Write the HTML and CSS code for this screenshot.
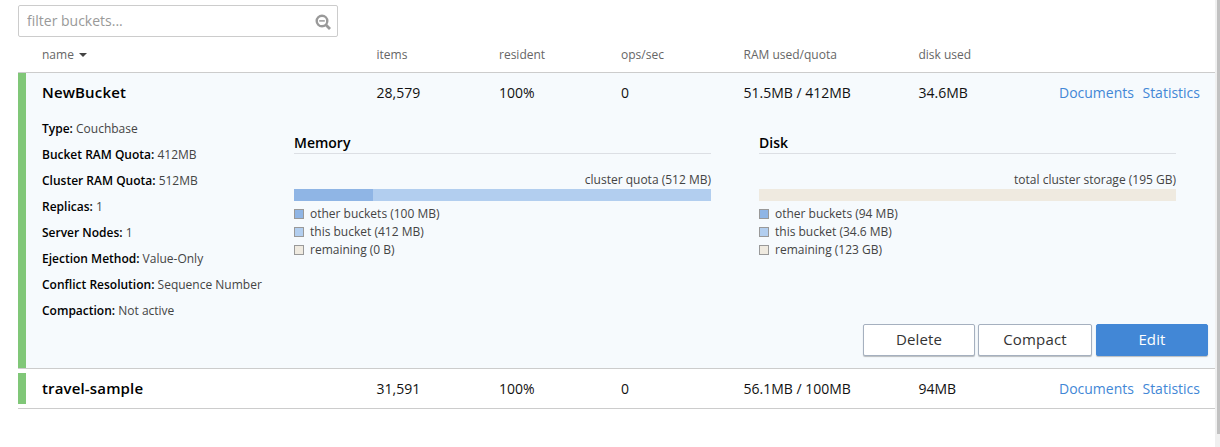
FILE: index.html
```html
<!DOCTYPE html>
<html lang="en">
<head>
<meta charset="utf-8">
<title>Buckets</title>
<link rel="stylesheet" href="styles.css">
</head>
<body>
<main class="page">
  <div class="filter">
    <input class="filter-input" type="text" placeholder="filter buckets...">
    <svg class="filter-icon" viewBox="0 0 16 16" fill="none" stroke="#999">
      <circle cx="7" cy="7" r="5.3" stroke-width="2.4"/>
      <path d="M4.2 6.9h5.6" stroke-width="1.5"/>
      <path d="M10.8 10.8l4.2 4.2" stroke-width="2.8"/>
    </svg>
  </div>

  <div class="columns header">
    <span class="sorted">name <i class="caret"></i></span>
    <span>items</span><span>resident</span><span>ops/sec</span><span>RAM used/quota</span><span>disk used</span>
  </div>

  <section class="bucket open">
    <div class="status"></div>
    <div class="content">
      <div class="columns summary">
        <h2 class="name">NewBucket</h2>
        <span>28,579</span><span>100%</span><span>0</span><span>51.5MB / 412MB</span><span>34.6MB</span>
        <nav class="links"><a>Documents</a><a>Statistics</a></nav>
      </div>
      <div class="details">
        <div class="facts">
          <p><b>Type:</b> Couchbase</p>
          <p><b>Bucket RAM Quota:</b> 412MB</p>
          <p><b>Cluster RAM Quota:</b> 512MB</p>
          <p><b>Replicas:</b> 1</p>
          <p><b>Server Nodes:</b> 1</p>
          <p><b>Ejection Method:</b> Value-Only</p>
          <p><b>Conflict Resolution:</b> Sequence Number</p>
          <p><b>Compaction:</b> Not active</p>
        </div>
        <div class="usage">
          <h3>Memory</h3>
          <div class="total">cluster quota (512 MB)</div>
          <div class="bar"><div class="other" style="width:19%"></div><div class="this" style="width:81%"></div></div>
          <ul class="legend">
            <li><i class="swatch other"></i>other buckets (100 MB)</li>
            <li><i class="swatch this"></i>this bucket (412 MB)</li>
            <li><i class="swatch remaining"></i>remaining (0 B)</li>
          </ul>
        </div>
        <div class="usage">
          <h3>Disk</h3>
          <div class="total">total cluster storage (195 GB)</div>
          <div class="bar"></div>
          <ul class="legend">
            <li><i class="swatch other"></i>other buckets (94 MB)</li>
            <li><i class="swatch this"></i>this bucket (34.6 MB)</li>
            <li><i class="swatch remaining"></i>remaining (123 GB)</li>
          </ul>
        </div>
      </div>
      <div class="actions">
        <button class="button delete">Delete</button>
        <button class="button compact">Compact</button>
        <button class="button primary">Edit</button>
      </div>
    </div>
  </section>

  <section class="bucket closed">
    <div class="status"></div>
    <div class="content">
      <div class="columns summary">
        <h2 class="name">travel-sample</h2>
        <span>31,591</span><span>100%</span><span>0</span><span>56.1MB / 100MB</span><span>94MB</span>
        <nav class="links"><a>Documents</a><a>Statistics</a></nav>
      </div>
    </div>
  </section>
</main>
<aside class="scrollbar"><div class="thumb"></div></aside>
</body>
</html>
```
FILE: styles.css
```css
* { box-sizing: border-box; }
body {
  margin: 0;
  height: 447px;
  display: flex;
  overflow: hidden;
  background: #fff;
  color: #444;
  font: 12px/18px "Open Sans", sans-serif;
}
h2, h3, p, ul { margin: 0; padding: 0; }
.page { width: 1215px; padding: 5px 0 0 18px; }
.filter {
  display: flex;
  align-items: center;
  width: 320px;
  height: 32px;
  padding: 1px 6px 0 8px;
  border: 1px solid #ccc;
  border-radius: 2px;
}
.filter-input {
  flex: 1;
  min-width: 0;
  padding: 0 0 1px;
  border: 0;
  outline: 0;
  background: none;
  font: 14px/20px "Open Sans", sans-serif;
}
.filter-input::placeholder { color: #999; }
.filter-icon { width: 16px; height: 16px; }

.columns {
  display: grid;
  grid-template-columns: 334.5px 122.5px 122px 122.5px 175px 1fr auto;
  align-items: center;
}
.header {
  height: 36px;
  padding-left: 24px;
  color: #666;
  border-bottom: 1px solid #ccc;
}
.sorted { display: flex; align-items: center; gap: 5px; }
.caret {
  border: 4px solid transparent;
  border-top-color: #444;
  border-bottom: 0;
}
.bucket { display: flex; border-bottom: 1px solid #ccc; }
.open { height: 296px; background: #f6fafd; }
.closed { height: 40px; }
.status { width: 8px; background: #80c778; }
.closed .status { height: 31px; margin-top: 4px; }
.content { flex: 1; padding-left: 16px; }
.summary { height: 39px; padding-right: 15px; color: #111; font-size: 14px; line-height: 20px; }
.name { padding-bottom: 2px; color: #000; font-size: 15px; font-weight: 600; letter-spacing: .15px; }
.links { display: flex; gap: 8.5px; color: #4287d6; }

.details { display: grid; grid-template-columns: 252px 417px 417px; height: 212px; }
.details .usage:last-child { margin-left: 48px; width: 417px; }
.facts { display: flex; flex-direction: column; gap: 8px; padding-top: 8px; }
.facts b { color: #000; font-weight: 600; }
.usage { padding-top: 21px; }
.usage h3 {
  height: 21px;
  border-bottom: 1px solid #dcdfe4;
  color: #000;
  font-size: 14px;
  line-height: 20px;
  font-weight: 600;
}
.total { margin-top: 17px; text-align: right; }
.bar { display: flex; height: 12px; background: #efeae0; }
.other { background: #8fb5e5; }
.this { background: #b2ceef; }
.remaining { background: #efeae0; }
.legend { list-style: none; margin-top: 4px; }
.legend li { display: flex; align-items: center; gap: 6px; }
.swatch { width: 10px; height: 10px; border: 1px solid #999; }

.actions { display: flex; justify-content: flex-end; gap: 3px; padding-right: 7px; }
.button {
  height: 32px;
  padding: 0 0 2px;
  border: 1px solid #a5b0bf;
  border-radius: 2px;
  background: #fff;
  color: #333;
  box-shadow: 0 1px 1px rgba(0, 0, 0, .25);
  font: 15px/20px "Open Sans", sans-serif;
  letter-spacing: .15px;
}
.delete { width: 112px; }
.compact { width: 114px; margin-right: 1px; }
.primary { width: 112px; background: #4287d6; border-color: #4287d6; color: #fff; }

.scrollbar { width: 5px; padding-left: 2px; background: #f0f0f0; }
.thumb { height: 434px; background: #c1c1c1; }
```
